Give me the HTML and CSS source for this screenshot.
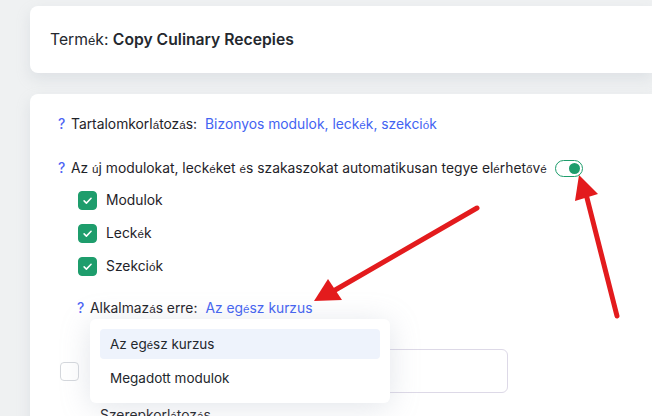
FILE: index.html
```html
<!DOCTYPE html>
<html lang="hu">
<head>
<meta charset="utf-8">
<title>Termék beállítások</title>
<link rel="stylesheet" href="styles.css">
</head>
<body>
<div class="page">
  <section class="card head-card">
    <p class="product">Term<span class="fb">é</span>k: <strong>Copy Culinary Recepies</strong></p>
  </section>

  <section class="card settings">
    <div class="row">
      <span class="help">?</span>
      <span class="label">Tartalomkorl<span class="fb">á</span>toz<span class="fb">á</span>s:</span>
      <a class="link" href="#">Bizonyos modulok, leck<span class="fb">é</span>k, szekci<span class="fb">ó</span>k</a>
    </div>

    <div class="row row-auto">
      <span class="help">?</span>
      <span class="label">Az <span class="fb">ú</span>j modulokat, leck<span class="fb">é</span>ket <span class="fb">é</span>s szakaszokat automatikusan tegye el<span class="fb">é</span>rhet<span class="fb">ő</span>v<span class="fb">é</span></span>
      <span class="toggle on"><span class="knob"></span></span>
    </div>

    <ul class="checks">
      <li><span class="box checked"><svg viewBox="0 0 20 20"><path d="M6 10.4l2.7 2.7L14.2 7.4"/></svg></span><span>Modulok</span></li>
      <li><span class="box checked"><svg viewBox="0 0 20 20"><path d="M6 10.4l2.7 2.7L14.2 7.4"/></svg></span><span>Leck<span class="fb">é</span>k</span></li>
      <li><span class="box checked"><svg viewBox="0 0 20 20"><path d="M6 10.4l2.7 2.7L14.2 7.4"/></svg></span><span>Szekci<span class="fb">ó</span>k</span></li>
    </ul>

    <div class="row row-apply">
      <span class="help">?</span>
      <span class="label">Alkalmaz<span class="fb">á</span>s erre:</span>
      <a class="link" href="#">Az eg<span class="fb">é</span>sz kurzus</a>

      <div class="menu">
        <div class="menu-item active">Az eg<span class="fb">é</span>sz kurzus</div>
        <div class="menu-item">Megadott modulok</div>
      </div>
    </div>

    <div class="row row-field">
      <span class="box"></span>
      <span class="field"></span>
    </div>

    <div class="row row-next">
      <span class="label">Szerepkorl<span class="fb">á</span>toz<span class="fb">á</span>s</span>
    </div>
  </section>

  <svg class="arrows" width="652" height="416" viewBox="0 0 652 416">
    <g fill="#e31b1d" stroke="#e31b1d">
      <line x1="477" y1="208" x2="330" y2="293" stroke-width="5" stroke-linecap="round"/>
      <polygon points="314,301 328,279 342,300" stroke="none"/>
      <line x1="617" y1="316" x2="586" y2="194" stroke-width="5" stroke-linecap="round"/>
      <polygon points="579,175 575,201 598,194" stroke="none"/>
    </g>
  </svg>
</div>
</body>
</html>
```

FILE: styles.css
```css
* { box-sizing: border-box; }

html, body {
  margin: 0;
  padding: 0;
  height: 100%;
  overflow: hidden;
}

body {
  background: #eff1f2;
  font-family: Inter, "Noto Sans", sans-serif;
  font-size: 13.85px;
  color: #1f2329;
}

.page {
  position: relative;
  height: 416px;
  overflow: hidden;
  padding: 6px 0 0 30px;
}

.card {
  background: #fff;
  border-radius: 8px 0 0 8px;
  box-shadow: 0 6px 14px rgba(170, 180, 190, 0.25);
}

/* narrower fallback face used for the accented letters */
.fb {
  font-family: "Liberation Sans", sans-serif;
  font-size: 0.84em;
  font-weight: 400;
}

.head-card {
  height: 67px;
  padding: 0 0 0 20px;
  display: flex;
  align-items: center;
}

.product {
  margin: 0;
  font-size: 15.7px;
  color: #24282e;
}

.product strong {
  font-weight: 600;
}

.settings {
  margin-top: 21px;
  height: 400px;
  padding: 20px 0 0 28px;
  display: flex;
  flex-direction: column;
}

.row {
  display: flex;
  align-items: center;
  height: 20px;
  white-space: nowrap;
}

.help {
  color: #4d64f4;
  font-weight: 500;
  width: 13px;
}

.label {
  margin-right: 8px;
}

.link {
  color: #4363f2;
  text-decoration: none;
}

.row-auto {
  margin-top: 24px;
}

.toggle {
  width: 28px;
  height: 17px;
  border: 1.5px solid #1e9d6c;
  border-radius: 9px;
  display: flex;
  align-items: center;
  justify-content: flex-end;
  padding: 0 2px;
}

.knob {
  width: 11px;
  height: 11px;
  border-radius: 50%;
  background: #1e9d6c;
}

.checks {
  list-style: none;
  margin: 12px 0 0 20px;
  padding: 0;
  display: flex;
  flex-direction: column;
  gap: 13px;
}

.checks li {
  display: flex;
  align-items: center;
  gap: 9px;
  height: 20px;
}

.box {
  width: 19px;
  height: 19px;
  border-radius: 4px;
  border: 1px solid #d5d8dd;
  background: #fff;
  display: inline-flex;
  flex: none;
}

.box.checked {
  background: #1e9d6c;
  border-color: #1e9d6c;
}

.box svg {
  width: 100%;
  height: 100%;
  fill: none;
  stroke: #fff;
  stroke-width: 1.8;
  stroke-linecap: round;
  stroke-linejoin: round;
}

.row-apply {
  position: relative;
  margin: 22px 0 0 19px;
}

.menu {
  position: absolute;
  left: 13px;
  top: 21px;
  width: 300px;
  padding: 10px;
  background: #fff;
  border-radius: 6px;
  box-shadow: 0 4px 30px rgba(150, 160, 180, 0.28);
  z-index: 2;
}

.menu-item {
  height: 30px;
  line-height: 30px;
  padding-left: 10px;
  border-radius: 4px;
  font-size: 13.5px;
  color: #23272d;
}

.menu-item + .menu-item {
  margin-top: 4px;
}

.menu-item.active {
  background: #eef3fc;
}

.row-field {
  margin: 31px 0 0 2px;
  height: 44px;
  gap: 13px;
}

.field {
  width: 416px;
  height: 44px;
  border: 1px solid #ddd9e7;
  border-radius: 6px;
}

.row-next {
  margin: 12px 0 0 42px;
}

.arrows {
  position: absolute;
  left: 0;
  top: 0;
  pointer-events: none;
  z-index: 3;
}
```
